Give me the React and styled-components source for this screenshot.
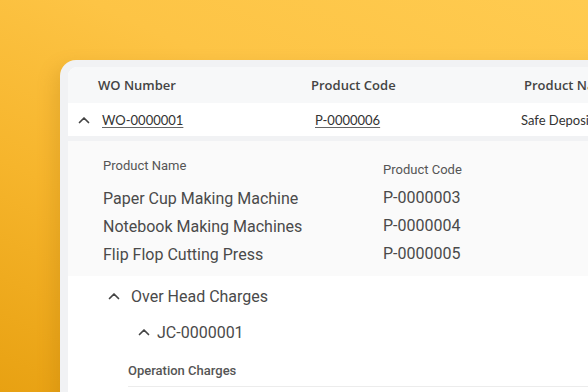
import React from "react"
import styled, { createGlobalStyle } from "styled-components"

const Global = createGlobalStyle`
  html, body {
    margin: 0;
    padding: 0;
  }
  body {
    width: 588px;
    height: 392px;
    overflow: hidden;
  }
`

const Stage = styled.div`
  width: 588px;
  height: 392px;
  box-sizing: border-box;
  padding: 60px 0 0 60px;
  overflow: hidden;
  background: linear-gradient(205deg, #ffcb50 0%, #fdc445 35%, #f6b52c 65%, #e8a112 100%);
`

const Card = styled.div`
  width: 560px;
  height: 360px;
  box-sizing: border-box;
  padding: 7px 0 0 8px;
  background: #f1f2f4;
  border-radius: 16px 0 0 0;
  box-shadow: -6px 6px 18px rgba(150, 95, 0, 0.18);
`

const Panel = styled.div`
  background: #ffffff;
  border-radius: 9px 0 0 0;
  overflow: hidden;
  height: 100%;
`

const HeaderRow = styled.div`
  display: grid;
  grid-template-columns: 213px 213px 1fr;
  align-items: center;
  height: 36px;
  padding-left: 30px;
  background: #f7f8f9;
  font-family: "Open Sans", "Noto Sans", sans-serif;
  font-size: 13px;
  font-weight: 600;
  color: #444;
  white-space: nowrap;
`

const DataRow = styled.div`
  display: grid;
  grid-template-columns: 24px 213px 206px 1fr;
  align-items: center;
  height: 33px;
  padding-left: 10px;
  background: #ffffff;
  border-bottom: 5px solid #f1f2f4;
  font-family: Lato, "Noto Sans", sans-serif;
  font-size: 13px;
  color: #333;
  white-space: nowrap;
`

const LinkText = styled.span`
  text-decoration: underline;
  text-underline-offset: 2px;
  text-decoration-color: #666;
`

const Chevron = ({ size = 12 }) => (
  <svg width={size} height={size} viewBox="0 0 12 12" fill="none">
    <polyline points="1.5,8.5 6,4 10.5,8.5" stroke="#444" strokeWidth="1.7" strokeLinecap="round" strokeLinejoin="round" />
  </svg>
)

const Detail = styled.div`
  background: #fafafa;
  padding: 14px 0 8px 35px;
  font-family: Roboto, "Noto Sans", sans-serif;
  color: #4a4a4a;
`

const DetailGrid = styled.div`
  display: grid;
  grid-template-columns: 280px 1fr;
  grid-template-rows: 29px repeat(3, 28px);
  align-items: center;
`

const SubHead = styled.div`
  align-self: start;
  line-height: 22px;
  font-size: 13px;
  font-weight: 400;
  color: #555;
  margin-top: ${p => p.$shift || 0}px;
`

const Cell = styled.div`
  font-size: 16px;
  color: #4a4a4a;
  margin-top: ${p => p.$shift || 0}px;
`

const Section = styled.div`
  font-family: Roboto, "Noto Sans", sans-serif;
  color: #4a4a4a;
  padding-top: 2px;
`

const ToggleRow = styled.div`
  display: flex;
  align-items: center;
  gap: ${p => p.$gap}px;
  padding-left: ${p => p.$indent}px;
  height: 36px;
  font-size: 16px;
  color: #4a4a4a;
`

const Label = styled.div`
  padding-left: 60px;
  margin-top: 10px;
  font-size: 13px;
  font-weight: 500;
  color: #555;
  height: 22px;
  line-height: 22px;
`

const Rule = styled.div`
  margin-left: 60px;
  margin-top: 4px;
  border-top: 1px solid #ececec;
`

const products = [
  ["Paper Cup Making Machine", "P-0000003"],
  ["Notebook Making Machines", "P-0000004"],
  ["Flip Flop Cutting Press", "P-0000005"],
]

export default function App() {
  return (
    <>
      <Global />
      <Stage>
        <Card>
          <Panel>
            <HeaderRow>
              <span>WO Number</span>
              <span>Product Code</span>
              <span>Product Name</span>
            </HeaderRow>
            <DataRow>
              <Chevron />
              <LinkText>WO-0000001</LinkText>
              <LinkText>P-0000006</LinkText>
              <span>Safe Deposit Locker</span>
            </DataRow>
            <Detail>
              <DetailGrid>
                <SubHead>Product Name</SubHead>
                <SubHead $shift={4}>Product Code</SubHead>
                {products.map(([name, code]) => (
                  <React.Fragment key={code}>
                    <Cell>{name}</Cell>
                    <Cell $shift={-2}>{code}</Cell>
                  </React.Fragment>
                ))}
              </DetailGrid>
            </Detail>
            <Section>
              <ToggleRow $indent={40} $gap={11}>
                <Chevron />
                <span>Over Head Charges</span>
              </ToggleRow>
              <ToggleRow $indent={70} $gap={7}>
                <Chevron />
                <span>JC-0000001</span>
              </ToggleRow>
              <Label>Operation Charges</Label>
              <Rule />
            </Section>
          </Panel>
        </Card>
      </Stage>
    </>
  )
}
